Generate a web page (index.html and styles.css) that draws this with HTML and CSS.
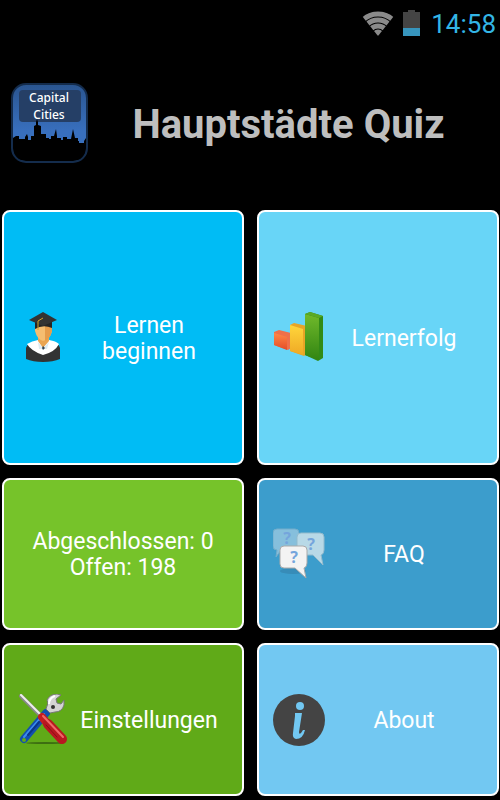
FILE: index.html
```
<!DOCTYPE html>
<html lang="de">
<head>
    <meta charset="utf-8">
    <meta name="viewport" content="width=device-width, initial-scale=1">
    <link rel="stylesheet" href="styles.css">
    <title>Hauptstädte Quiz</title>
</head>
<body>
    <div class="statusbar">
        <svg class="wifi" viewBox="0 0 32 25" width="32" height="25">
            <clipPath id="fan"><path d="M0 5Q16 -5 32 5L16 25Z"/></clipPath>
            <g clip-path="url(#fan)" fill="none" stroke="#8a8a8a" stroke-width="5">
                <circle cx="16" cy="25" r="22"/>
                <circle cx="16" cy="25" r="16"/>
                <circle cx="16" cy="25" r="10"/>
                <circle cx="16" cy="25" r="3" stroke-width="7"/>
            </g>
        </svg>
        <svg class="battery" viewBox="0 0 17 26" width="17" height="26">
            <path d="M5 0H12V2H17V26H0V2H5Z" fill="#444"/>
            <rect y="18" width="17" height="8" fill="#3795bd"/>
        </svg>
        <span class="clock">14:58</span>
    </div>

    <header class="header">
        <svg class="logo" viewBox="0 0 77 80" width="77" height="80">
            <defs>
                <linearGradient id="sky" x1="0" y1="0" x2="0" y2="1">
                    <stop offset="0" stop-color="#2a5590"/>
                    <stop offset="0.6" stop-color="#386fbd"/>
                </linearGradient>
            </defs>
            <rect x="1" y="1" width="75" height="78" rx="14" fill="url(#sky)"/>
            <rect x="8" y="7" width="62" height="32" rx="4" fill="#253f66"/>
            <path d="M2 55L5 53H8V56H14V54L16 51L17 54V57H20V53H23V43L25 42V39L26 36L27 39V42L30 43V51H35V55H38V56H40V53H43L45 46L46 53V55H50V57H52V54H56V56H60L62 46L64 55H67V58H68V60H73V58L75 55V66Q75 78 62 78H15Q2 78 2 66Z" fill="#000"/>
            <rect x="1" y="1" width="75" height="78" rx="14" fill="none" stroke="#142c4c" stroke-width="2"/>
            <g class="logo-text">
                <text x="38" y="19">Capital</text>
                <text x="38" y="36">Cities</text>
            </g>
        </svg>
        <h1 class="title">Hauptstädte Quiz</h1>
    </header>

    <main class="menu">
        <button class="tile learn">
            <svg class="icon" viewBox="0 0 52 52">
                <path d="M8 47V36Q9 31 18 29L25 33L33 29Q41 31 42 36V47Q35 50 25 50Q15 50 8 47Z" fill="#333"/>
                <path d="M9 32Q14 29 20 28L25 32L31 28Q38 29 41 32Q37 40 25 43Q13 39 9 32Z" fill="#fff"/>
                <path d="M20 25H31V29L25 36L20 29Z" fill="#eaa552"/>
                <path d="M20 30L25 36L31 30L29 37H21Z" fill="#dceaf2"/>
                <path d="M25 34L27 36L25 38L24 36Z" fill="#345"/>
                <path d="M17 12H34V19Q32 28 25 29Q19 27 17 19Z" fill="#f5bd70"/>
                <path d="M27 13H34V19Q32 27 27 29Z" fill="#e69c4b"/>
                <path d="M17 9H34V16Q25 12 17 17Z" fill="#252525"/>
                <path d="M11 8L25 0L39 8L25 14Z" fill="#333"/>
                <path d="M25 6L20 9V18" fill="none" stroke="#d6a52c" stroke-width="1"/>
            </svg>
            <span class="label">Lernen beginnen</span>
        </button>
        <button class="tile success">
            <svg class="icon" viewBox="0 0 52 52">
                <defs>
                    <linearGradient id="red" x1="0" y1="0" x2="0" y2="1"><stop stop-color="#ff8845"/><stop offset="1" stop-color="#e44c29"/></linearGradient>
                    <linearGradient id="yellow" x1="0" y1="0" x2="0" y2="1"><stop stop-color="#ffd63b"/><stop offset="1" stop-color="#efa925"/></linearGradient>
                    <linearGradient id="green" x1="0" y1="0" x2="0" y2="1"><stop stop-color="#70b92b"/><stop offset="1" stop-color="#328512"/></linearGradient>
                </defs>
                <path d="M1 20L6 18L18 21V36L15 38L1 33Z" fill="#ef7049"/>
                <path d="M1 21L14 25V38L1 33Z" fill="url(#red)"/>
                <path d="M17 13L21 11L34 14V42L31 44L17 39Z" fill="#e8a526"/>
                <path d="M17 13L30 17V43L17 39Z" fill="url(#yellow)"/>
                <path d="M32 2L37 0L50 4V46L45 49L32 43Z" fill="#328b17"/>
                <path d="M32 2L46 6V48L32 43Z" fill="url(#green)"/>
                <path d="M32 2L37 0L50 4L46 6Z" fill="#5aa928"/>
            </svg>
            <span class="label">Lernerfolg</span>
        </button>
        <div class="tile stats">
            <p class="label">Abgeschlossen: 0<br>Offen: 198</p>
        </div>
        <button class="tile faq">
            <svg class="icon" viewBox="0 0 52 52">
                <g class="marks">
                    <path d="M4 1H22Q26 1 26 5V18Q26 22 22 22H8L3 29L4 22Q0 22 0 18V5Q0 1 4 1Z" fill="#86bfdc" stroke="#73adcb"/>
                    <text x="14" y="16">?</text>
                    <path d="M28 5H47Q51 5 51 9V22Q51 26 48 27L50 37L40 27H28Q24 27 24 23V9Q24 5 28 5Z" fill="#b8d9e7" stroke="#93bbcd"/>
                    <text x="38" y="22">?</text>
                    <ellipse cx="20" cy="43" rx="13" ry="3" fill="#317ca3" opacity="0.5"/>
                    <path d="M11 18H30Q34 18 34 22V35Q34 39 31 40L33 50L22 40H11Q7 40 7 36V22Q7 18 11 18Z" fill="#f3f3f3" stroke="#aaa"/>
                    <text x="21" y="35">?</text>
                </g>
            </svg>
            <span class="label">FAQ</span>
        </button>
        <button class="tile settings">
            <svg class="icon" viewBox="0 0 52 52">
                <ellipse cx="27" cy="49" rx="19" ry="1" fill="#3d6e12"/>
                <g fill="none" stroke-linecap="round">
                    <path d="M28 19L6 45" stroke="#134fae" stroke-width="8"/>
                    <path d="M26 20L6 43" stroke="#3c8cee" stroke-width="2"/>
                    <path d="M21 28L10 41" stroke="#0b3688" stroke-width="2"/>
                    <path d="M3 2L23 22" stroke="#888" stroke-width="4"/>
                    <path d="M3 1L22 20" stroke="#eee" stroke-width="2"/>
                    <path d="M24 23L28 28" stroke="#c51c20" stroke-width="8"/>
                    <path d="M30 30L44 45" stroke="#b81820" stroke-width="10"/>
                    <path d="M25 22L45 43" stroke="#ef6868" stroke-width="2"/>
                    <path d="M28 31L39 43" stroke="#8d0c16" stroke-width="1"/>
                </g>
                <path d="M28 15L30 9L29 6Q32 0 39 0L43 1L38 5L39 9L43 10L46 6V11Q44 18 37 18L32 19Z" fill="#d4d4d4" stroke="#777"/>
                <path d="M31 10Q31 4 37 2" fill="none" stroke="#fff" stroke-width="2"/>
                <circle cx="35" cy="13" r="2" fill="#333"/>
                <circle cx="6" cy="46" r="2" fill="#60aa18"/>
            </svg>
            <span class="label">Einstellungen</span>
        </button>
        <button class="tile about">
            <svg class="icon" viewBox="0 0 52 52">
                <circle cx="26" cy="26" r="26" fill="#444"/>
                <circle cx="27" cy="12" r="4" fill="#72c8f2"/>
                <path d="M22 19H29L26 38Q26 41 28 39L30 36H32Q30 45 23 45Q19 44 20 39L22 22Z" fill="#72c8f2"/>
            </svg>
            <span class="label">About</span>
        </button>
    </main>
</body>
</html>
```

FILE: styles.css
```
* {
    box-sizing: border-box;
}
body {
    display: flex;
    flex-direction: column;
    min-height: 100vh;
    margin: 0;
    background-color: #000;
    font-family: Roboto, "Liberation Sans", sans-serif;
}
.statusbar {
    display: flex;
    align-items: center;
    justify-content: flex-end;
    gap: 9px;
    height: 46px;
    padding-right: 4px;
}
.clock {
    margin-left: 2px;
    padding-top: 2px;
    color: #33b5e5;
    font-size: 26px;
}
.header {
    display: flex;
    align-items: center;
    padding: 37px 11px 47px;
}
.logo {
    flex: none;
}
.logo-text {
    fill: #fff;
    font-family: "Noto Sans", sans-serif;
    font-size: 12px;
    font-weight: 500;
    text-anchor: middle;
}
.title {
    flex: 1;
    margin: 0;
    padding-top: 4px;
    color: #bebebe;
    font-size: 40px;
    line-height: 48px;
    text-align: center;
}
.menu {
    display: grid;
    flex: 1;
    grid-template-columns: 1fr 1fr;
    grid-template-rows: 255fr 152fr 153fr;
    gap: 13px;
    padding: 0 1px 4px 2px;
}
.tile {
    display: flex;
    align-items: center;
    padding: 14px;
    border: 2px solid #fff;
    border-radius: 8px;
    color: #fff;
    font-family: inherit;
    font-size: 23px;
    line-height: 26px;
    text-align: center;
}
button.tile {
    cursor: pointer;
}
.icon {
    flex: none;
    width: 52px;
    height: 52px;
}
.label {
    flex: 1;
    margin: 0;
    padding-top: 2px;
}
.marks {
    fill: #75a5dc;
    font-family: "Noto Sans", sans-serif;
    font-size: 16px;
    font-weight: bold;
    text-anchor: middle;
}
.learn {
    background-color: #00bcf5;
}
.success {
    background-color: #68d5f7;
}
.stats {
    background-color: #76c32a;
}
.faq {
    background-color: #3c9dcc;
}
.settings {
    background-color: #60aa18;
}
.about {
    background-color: #72c8f2;
}
```
